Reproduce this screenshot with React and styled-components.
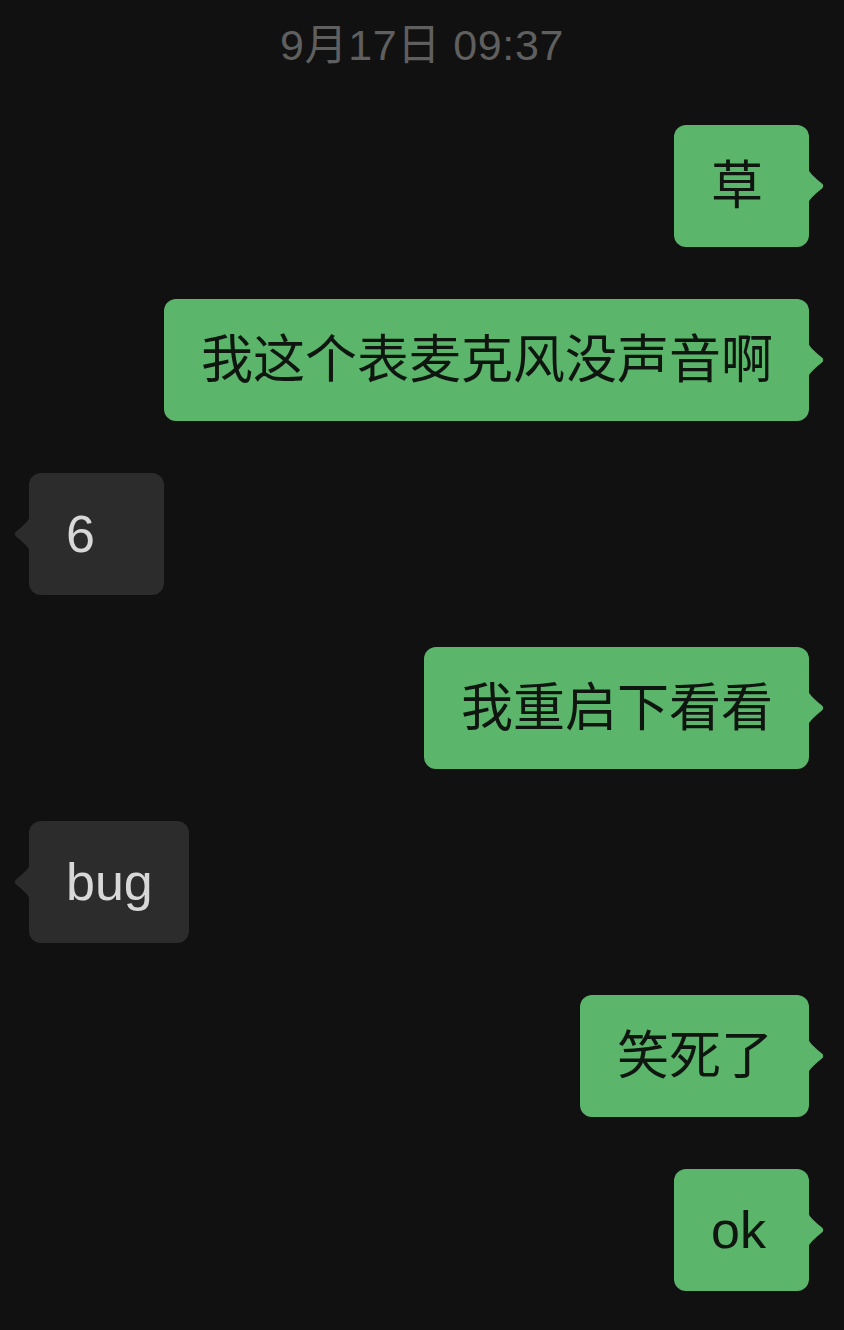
import React from "react";
import styled, { createGlobalStyle } from "styled-components";

const Global = createGlobalStyle`
  html, body {
    margin: 0;
    padding: 0;
    background: #111111;
  }
  body {
    font-family: "Liberation Sans", "Noto Sans CJK SC", sans-serif;
  }
`;

const Page = styled.div`
  width: 844px;
  min-height: 1330px;
  box-sizing: border-box;
  background: #111111;
  display: flex;
  flex-direction: column;
  padding-top: 15px;
`;

const Timestamp = styled.div`
  text-align: center;
  color: #5f5f5f;
  font-size: 43px;
  letter-spacing: 0.6px;
  line-height: 60px;
  height: 60px;
  margin-bottom: 50px;
`;

const List = styled.div`
  display: flex;
  flex-direction: column;
  gap: 52px;
`;

const Row = styled.div`
  display: flex;
  justify-content: ${(p) => (p.$mine ? "flex-end" : "flex-start")};
  padding: ${(p) => (p.$mine ? "0 35px 0 0" : "0 0 0 29px")};
`;

const Bubble = styled.div`
  position: relative;
  box-sizing: border-box;
  min-width: 135px;
  max-width: 660px;
  padding: 25px 36px 25px 37px;
  border-radius: 12px;
  font-size: 52px;
  line-height: 72px;
  white-space: nowrap;
  background: ${(p) => (p.$mine ? "#5bb56b" : "#2c2c2c")};
  color: ${(p) => (p.$mine ? "#0e160f" : "#d8d8d8")};
`;

const Tail = styled.svg`
  position: absolute;
  top: 50%;
  margin-top: -17px;
  width: 17px;
  height: 34px;
  ${(p) => (p.$mine ? "right: -16px;" : "left: -16px; transform: scaleX(-1);")}
  fill: ${(p) => (p.$mine ? "#5bb56b" : "#2c2c2c")};
`;

function Message({ mine, children }) {
  return (
    <Row $mine={mine}>
      <Bubble $mine={mine}>
        <Tail $mine={mine} viewBox="0 0 17 34">
          <path d="M0 0 C2 4 7 9 14 14.5 Q16.5 17 14 19.5 C7 25 2 30 0 34 Z" />
        </Tail>
        {children}
      </Bubble>
    </Row>
  );
}

const messages = [
  { mine: true, text: "草" },
  { mine: true, text: "我这个表麦克风没声音啊" },
  { mine: false, text: "6" },
  { mine: true, text: "我重启下看看" },
  { mine: false, text: "bug" },
  { mine: true, text: "笑死了" },
  { mine: true, text: "ok" },
];

export default function App() {
  return (
    <>
      <Global />
      <Page>
        <Timestamp>9月17日 09:37</Timestamp>
        <List>
          {messages.map((m, i) => (
            <Message key={i} mine={m.mine}>
              {m.text}
            </Message>
          ))}
        </List>
      </Page>
    </>
  );
}
